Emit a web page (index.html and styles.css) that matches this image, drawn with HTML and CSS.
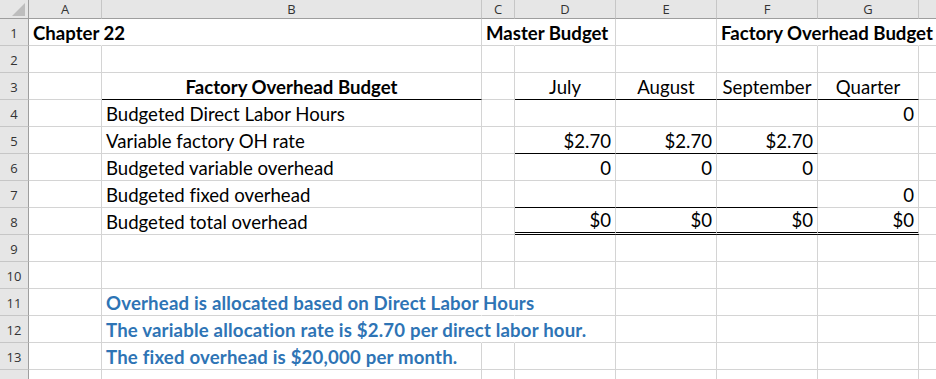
FILE: index.html
```html
<!DOCTYPE html>
<html>
<head>
<meta charset="utf-8">
<link rel="stylesheet" href="styles.css">
</head>
<body>
<div class="sheet">
  <div class="hd corner"><span class="tri"></span></div>
  <div class="hd col">A</div>
  <div class="hd col">B</div>
  <div class="hd col">C</div>
  <div class="hd col">D</div>
  <div class="hd col">E</div>
  <div class="hd col">F</div>
  <div class="hd col">G</div>
  <div class="hd col"></div>

  <div class="hd row">1</div>
  <div class="c b nr">Chapter 22</div>
  <div class="c"></div>
  <div class="c b nr">Master Budget</div>
  <div class="c"></div>
  <div class="c"></div>
  <div class="c b nr">Factory Overhead Budget</div>
  <div class="c nr"></div>
  <div class="c"></div>

  <div class="hd row">2</div>
  <div class="c"></div><div class="c"></div><div class="c"></div><div class="c"></div><div class="c"></div><div class="c"></div><div class="c"></div><div class="c"></div>

  <div class="hd row">3</div>
  <div class="c"></div>
  <div class="c b m bb">Factory Overhead Budget</div>
  <div class="c"></div>
  <div class="c m bb">July</div>
  <div class="c m bb">August</div>
  <div class="c m bb">September</div>
  <div class="c m bb">Quarter</div>
  <div class="c"></div>

  <div class="hd row">4</div>
  <div class="c"></div>
  <div class="c">Budgeted Direct Labor Hours</div>
  <div class="c"></div>
  <div class="c"></div>
  <div class="c"></div>
  <div class="c"></div>
  <div class="c r">0</div>
  <div class="c"></div>

  <div class="hd row">5</div>
  <div class="c"></div>
  <div class="c">Variable factory OH rate</div>
  <div class="c"></div>
  <div class="c r bb">$2.70</div>
  <div class="c r bb">$2.70</div>
  <div class="c r bb">$2.70</div>
  <div class="c"></div>
  <div class="c"></div>

  <div class="hd row">6</div>
  <div class="c"></div>
  <div class="c">Budgeted variable overhead</div>
  <div class="c"></div>
  <div class="c r">0</div>
  <div class="c r">0</div>
  <div class="c r">0</div>
  <div class="c"></div>
  <div class="c"></div>

  <div class="hd row">7</div>
  <div class="c"></div>
  <div class="c">Budgeted fixed overhead</div>
  <div class="c"></div>
  <div class="c bb"></div>
  <div class="c bb"></div>
  <div class="c bb"></div>
  <div class="c r">0</div>
  <div class="c"></div>

  <div class="hd row">8</div>
  <div class="c"></div>
  <div class="c">Budgeted total overhead</div>
  <div class="c"></div>
  <div class="c r db">$0</div>
  <div class="c r db">$0</div>
  <div class="c r db">$0</div>
  <div class="c r db">$0</div>
  <div class="c"></div>

  <div class="hd row">9</div>
  <div class="c"></div><div class="c"></div><div class="c"></div><div class="c"></div><div class="c"></div><div class="c"></div><div class="c"></div><div class="c"></div>

  <div class="hd row">10</div>
  <div class="c"></div><div class="c"></div><div class="c"></div><div class="c"></div><div class="c"></div><div class="c"></div><div class="c"></div><div class="c"></div>

  <div class="hd row">11</div>
  <div class="c"></div>
  <div class="c b blue nr">Overhead is allocated based on Direct Labor Hours</div>
  <div class="c nr"></div>
  <div class="c"></div>
  <div class="c"></div>
  <div class="c"></div>
  <div class="c"></div>
  <div class="c"></div>

  <div class="hd row">12</div>
  <div class="c"></div>
  <div class="c b blue nr">The variable allocation rate is $2.70 per direct labor hour.</div>
  <div class="c nr"></div>
  <div class="c"></div>
  <div class="c"></div>
  <div class="c"></div>
  <div class="c"></div>
  <div class="c"></div>

  <div class="hd row">13</div>
  <div class="c"></div>
  <div class="c b blue">The fixed overhead is $20,000 per month.</div>
  <div class="c"></div>
  <div class="c"></div>
  <div class="c"></div>
  <div class="c"></div>
  <div class="c"></div>
  <div class="c"></div>

  <div class="hd row"></div>
  <div class="c"></div><div class="c"></div><div class="c"></div><div class="c"></div><div class="c"></div><div class="c"></div><div class="c"></div><div class="c"></div>
</div>
</body>
</html>
```

FILE: styles.css
```css
html, body {
  margin: 0;
  padding: 0;
  background: #ffffff;
  overflow: hidden;
}

.sheet {
  display: grid;
  grid-template-columns: 29px 73px 380px 33px 101px 101px 101px 101px 40px;
  grid-template-rows: 19px;
  grid-auto-rows: 27px;
  width: 936px;
  overflow: hidden;
}

.hd {
  box-sizing: border-box;
  background: #e6e6e6;
  font-family: "Open Sans", "Noto Sans", sans-serif;
  font-size: 13px;
  color: #333333;
  display: flex;
  align-items: center;
  justify-content: center;
}

.col {
  border-right: 1px solid #c6c6c6;
  border-bottom: 1px solid #9e9e9e;
}

.corner {
  border-right: 1px solid #9e9e9e;
  border-bottom: 1px solid #9e9e9e;
  align-items: flex-end;
  justify-content: flex-end;
  padding: 0 3px 2px 0;
}

.tri {
  width: 0;
  height: 0;
  border-left: 13px solid transparent;
  border-bottom: 13px solid #bdbdbd;
}

.row {
  border-right: 1px solid #9e9e9e;
  border-bottom: 1px solid #c6c6c6;
  padding-top: 2px;
}

.c {
  box-sizing: border-box;
  border-right: 1px solid #d4d4d4;
  border-bottom: 1px solid #d4d4d4;
  display: flex;
  align-items: flex-end;
  padding: 0 4px 2px 4px;
  white-space: nowrap;
  overflow: visible;
  font-family: Lato, "Liberation Sans", sans-serif;
  font-size: 18.6px;
  line-height: 20px;
  font-variant-ligatures: none;
  color: #000000;
}

.b { font-weight: bold; }
.r { justify-content: flex-end; }
.m { justify-content: center; }
.nr { border-right-color: transparent; }
.bb { border-bottom-color: #000000; }
.db {
  border-bottom: 3px double #000000;
}
.blue {
  color: #2e74b5;
  letter-spacing: 0.18px;
}
```
